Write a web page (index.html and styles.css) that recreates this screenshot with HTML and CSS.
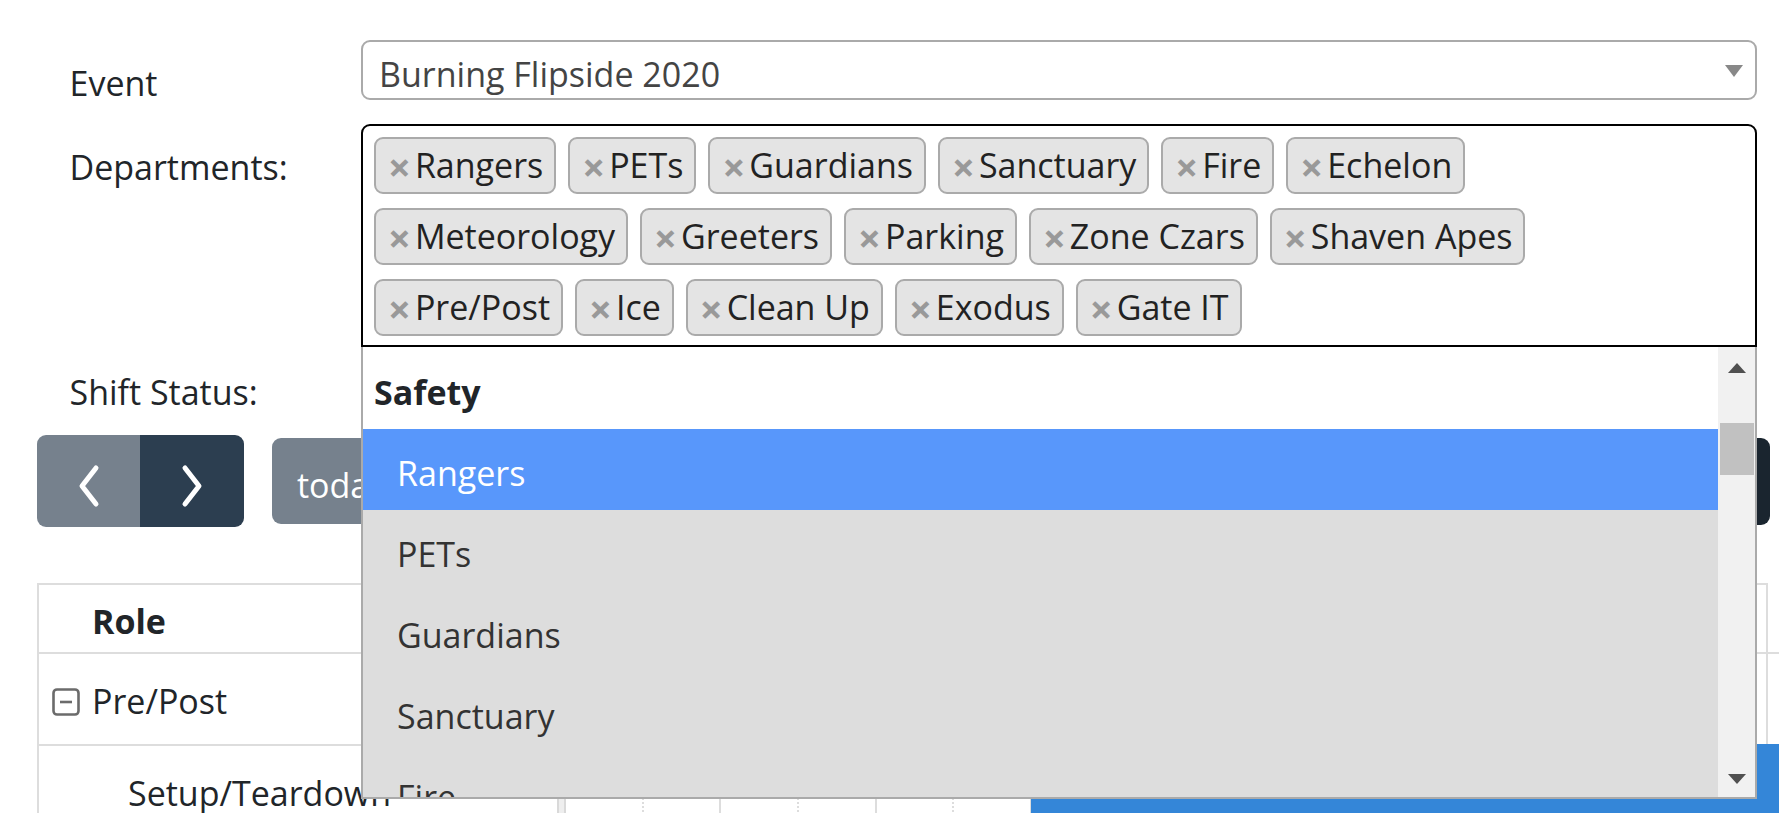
FILE: index.html
```html
<!DOCTYPE html>
<html lang="en">
<head>
<meta charset="utf-8">
<title>Shifts</title>
<link rel="stylesheet" href="styles.css">
</head>
<body>
<div class="page">
  <form class="filters">
    <div class="frow r-event">
      <label class="flabel">Event</label>
      <div class="fctl">
        <div class="select">Burning Flipside 2020<span class="select-arrow"></span></div>
      </div>
    </div>
    <div class="frow r-dept">
      <label class="flabel">Departments:</label>
      <div class="fctl">
        <ul class="multi">
          <li class="tag"><span class="tag-x">×</span>Rangers</li>
          <li class="tag"><span class="tag-x">×</span>PETs</li>
          <li class="tag"><span class="tag-x">×</span>Guardians</li>
          <li class="tag"><span class="tag-x">×</span>Sanctuary</li>
          <li class="tag"><span class="tag-x">×</span>Fire</li>
          <li class="tag"><span class="tag-x">×</span>Echelon</li>
          <li class="tag"><span class="tag-x">×</span>Meteorology</li>
          <li class="tag"><span class="tag-x">×</span>Greeters</li>
          <li class="tag"><span class="tag-x">×</span>Parking</li>
          <li class="tag"><span class="tag-x">×</span>Zone Czars</li>
          <li class="tag"><span class="tag-x">×</span>Shaven Apes</li>
          <li class="tag"><span class="tag-x">×</span>Pre/Post</li>
          <li class="tag"><span class="tag-x">×</span>Ice</li>
          <li class="tag"><span class="tag-x">×</span>Clean Up</li>
          <li class="tag"><span class="tag-x">×</span>Exodus</li>
          <li class="tag"><span class="tag-x">×</span>Gate IT</li>
        </ul>
        <div class="dropdown">
          <ul class="results">
            <li class="group-label">Safety</li>
            <li class="opt hl">Rangers</li>
            <li class="opt">PETs</li>
            <li class="opt">Guardians</li>
            <li class="opt">Sanctuary</li>
            <li class="opt">Fire</li>
            <li class="opt">Echelon</li>
          </ul>
          <div class="sbar">
            <div class="sb-btn"><span class="tri-up"></span></div>
            <div class="sb-thumb"></div>
            <div class="sb-space"></div>
            <div class="sb-btn down"><span class="tri-down"></span></div>
          </div>
        </div>
      </div>
    </div>
    <div class="frow r-status">
      <label class="flabel">Shift Status:</label>
    </div>
  </form>

  <div class="toolbar">
    <div class="tb-left">
      <div class="btn-group">
        <button class="fc-btn prev" type="button" aria-label="prev">
          <svg width="24" height="44" viewBox="0 0 24 44"><polyline points="19,4 5,22 19,40" fill="none" stroke="#fff" stroke-width="5" stroke-linecap="round" stroke-linejoin="round"/></svg>
        </button>
        <button class="fc-btn next" type="button" aria-label="next">
          <svg width="24" height="44" viewBox="0 0 24 44"><polyline points="5,4 19,22 5,40" fill="none" stroke="#fff" stroke-width="5" stroke-linecap="round" stroke-linejoin="round"/></svg>
        </button>
      </div>
      <button class="fc-btn today" type="button">today</button>
    </div>
    <div class="tb-right">
      <div class="btn-group">
        <button class="fc-btn view" type="button">day</button>
        <button class="fc-btn view active" type="button">week</button>
      </div>
    </div>
  </div>

  <div class="cal">
    <div class="res-cell head"><span class="role">Role</span></div>
    <div class="divider"></div>
    <div class="tl-cell"></div>

    <div class="res-cell group">
      <svg class="expander" width="28" height="28" viewBox="0 0 28 28"><rect x="1.5" y="1.5" width="25" height="25" rx="3.5" fill="none" stroke="#6b6b6b" stroke-width="2.6"/><line x1="8" y1="14" x2="20" y2="14" stroke="#6b6b6b" stroke-width="2.6"/></svg>
      <span>Pre/Post</span>
    </div>
    <div class="tl-cell"></div>

    <div class="res-cell sub"><span>Setup/Teardown</span></div>
    <div class="tl-cell">
      <div class="slots">
        <div class="slot"></div><div class="slot"></div><div class="slot"></div><div class="slot"></div>
        <div class="slot"></div><div class="slot"></div><div class="slot"></div><div class="slot"></div>
        <div class="slot"></div><div class="slot"></div><div class="slot"></div><div class="slot"></div>
        <div class="slot"></div><div class="slot"></div><div class="slot"></div><div class="slot"></div>
      </div>
      <div class="event"></div>
    </div>
  </div>
</div>
</body>
</html>
```

FILE: styles.css
```css
html, body {
  margin: 0;
  height: 813px;
  overflow: hidden;
}
body {
  font-family: "Open Sans", "Noto Sans", sans-serif;
  font-size: 34px;
  line-height: 1.5;
  color: #212529;
  background: #fff;
}
ul {
  list-style: none;
  margin: 0;
  padding: 0;
}
.page {
  padding: 40px 9px 0 37px;
}

/* ---------- filter form ---------- */
.filters {
  margin: 0 13px 0 32.5px;
}
.frow {
  display: flex;
  align-items: flex-start;
}
.r-event {
  height: 60px;
}
.r-dept {
  margin-top: 24px;
}
.r-status {
  margin-top: 2px;
}
.flabel {
  width: 291.5px;
  flex: none;
  padding-top: 17.5px;
}
.fctl {
  flex: 1;
  position: relative;
}
.select {
  position: relative;
  height: 60px;
  box-sizing: border-box;
  border: 2px solid #aaa;
  border-radius: 9px;
  padding: 10px 0 0 16px;
  line-height: 45px;
  color: #444;
}
.select-arrow {
  position: absolute;
  right: 12px;
  top: 23px;
  width: 0;
  height: 0;
  border-style: solid;
  border-width: 12px 9.5px 0;
  border-color: #888 transparent transparent;
}
.multi {
  height: 223px;
  box-sizing: border-box;
  border: 2px solid #000;
  border-radius: 9px 9px 0 0;
  padding: 11px 60px 0 11px;
  display: flex;
  flex-wrap: wrap;
  align-content: flex-start;
  gap: 14px 12px;
}
.tag {
  height: 57px;
  box-sizing: border-box;
  border: 2px solid #aaa;
  border-radius: 9px;
  background: #e4e4e4;
  padding: 0 11px 0 12px;
  display: flex;
  align-items: center;
  color: #222;
  white-space: nowrap;
}
.tag-x {
  color: #999;
  font-weight: 700;
  font-size: 40px;
  line-height: 1;
  margin-right: 4px;
  position: relative;
  top: 1px;
}

/* ---------- open dropdown ---------- */
.dropdown {
  position: absolute;
  top: 100%;
  left: 0;
  right: 0;
  height: 452px;
  box-sizing: border-box;
  border: 2px solid #aaa;
  border-top: 0;
  background: #fff;
  display: flex;
  overflow: hidden;
  z-index: 5;
}
.results {
  flex: 1;
  overflow: hidden;
}
.group-label {
  height: 82px;
  box-sizing: border-box;
  padding: 8px 0 0 11px;
  display: flex;
  align-items: center;
  font-weight: 700;
  color: #212529;
}
.opt {
  height: 81px;
  box-sizing: border-box;
  padding: 7px 0 0 34px;
  display: flex;
  align-items: center;
  background: #ddd;
  color: #333;
}
.opt.hl {
  background: #5897fb;
  color: #fff;
}
.sbar {
  width: 37px;
  flex: none;
  background: #f1f1f1;
  display: flex;
  flex-direction: column;
  align-items: center;
}
.sb-btn {
  height: 42px;
  width: 100%;
  box-sizing: border-box;
  display: flex;
  align-items: center;
  justify-content: center;
}
.sb-btn.down {
  padding-top: 5px;
}
.tri-up {
  width: 0;
  height: 0;
  border-style: solid;
  border-width: 0 9.5px 10px;
  border-color: transparent transparent #505050;
}
.tri-down {
  width: 0;
  height: 0;
  border-style: solid;
  border-width: 10px 9.5px 0;
  border-color: #505050 transparent transparent;
}
.sb-thumb {
  margin-top: 34px;
  width: 34px;
  height: 52px;
  background: #c1c1c1;
}
.sb-space {
  flex: 1;
}

/* ---------- calendar toolbar ---------- */
.toolbar {
  margin-top: 17.5px;
  height: 92px;
  display: flex;
  justify-content: space-between;
  align-items: center;
}
.tb-left {
  display: flex;
  align-items: center;
}
.btn-group {
  display: flex;
}
.fc-btn {
  font: inherit;
  border: 0;
  margin: 0;
  color: #fff;
  background: #2c3e50;
  display: flex;
  align-items: center;
  justify-content: center;
  box-sizing: border-box;
}
.prev {
  width: 103px;
  height: 92px;
  padding: 10px 0 0;
  background: #76818d;
  border-radius: 9px 0 0 9px;
}
.next {
  width: 104px;
  height: 92px;
  padding: 10px 0 0;
  background: #2c3e50;
  border-radius: 0 9px 9px 0;
}
.today {
  margin-left: 28px;
  height: 86px;
  padding: 8px 25px 0;
  background: #76818d;
  border-radius: 9px;
}
.view {
  height: 87px;
  padding: 8px 25px 0;
}
.view:first-child {
  border-radius: 9px 0 0 9px;
}
.view.active {
  background: #1a252f;
  border-radius: 0 9px 9px 0;
}

/* ---------- resource timeline ---------- */
.cal {
  margin: 56px 2px 0 0;
  display: grid;
  grid-template-columns: 518px 9px 1fr;
  grid-template-rows: 69px 92px 92px;
  border: 2px solid #ddd;
  border-bottom: 0;
}
.res-cell {
  border-bottom: 2px solid #ddd;
  display: flex;
  align-items: center;
  white-space: nowrap;
  box-sizing: border-box;
  padding-top: 5px;
}
.res-cell.head {
  padding-left: 53px;
}
.role {
  font-weight: 700;
}
.res-cell.group {
  padding-left: 13px;
}
.expander {
  margin-right: 12px;
  flex: none;
}
.res-cell.sub {
  padding-left: 89px;
}
.divider {
  grid-column: 2;
  grid-row: 1 / 4;
  background: #eee;
  border-left: 2px solid #d9d9d9;
  border-right: 2px solid #d9d9d9;
}
.tl-cell {
  grid-column: 3;
  border-bottom: 2px solid #ddd;
  position: relative;
}
.slots {
  display: flex;
  height: 100%;
  overflow: hidden;
}
.slot {
  flex: 0 0 77.7px;
  box-sizing: border-box;
  border-right: 2px solid #ddd;
}
.slot:nth-child(odd) {
  border-right-style: dotted;
}
.event {
  position: absolute;
  left: 465px;
  right: -1px;
  top: -2px;
  bottom: 0;
  background: #3486d8;
}
```
